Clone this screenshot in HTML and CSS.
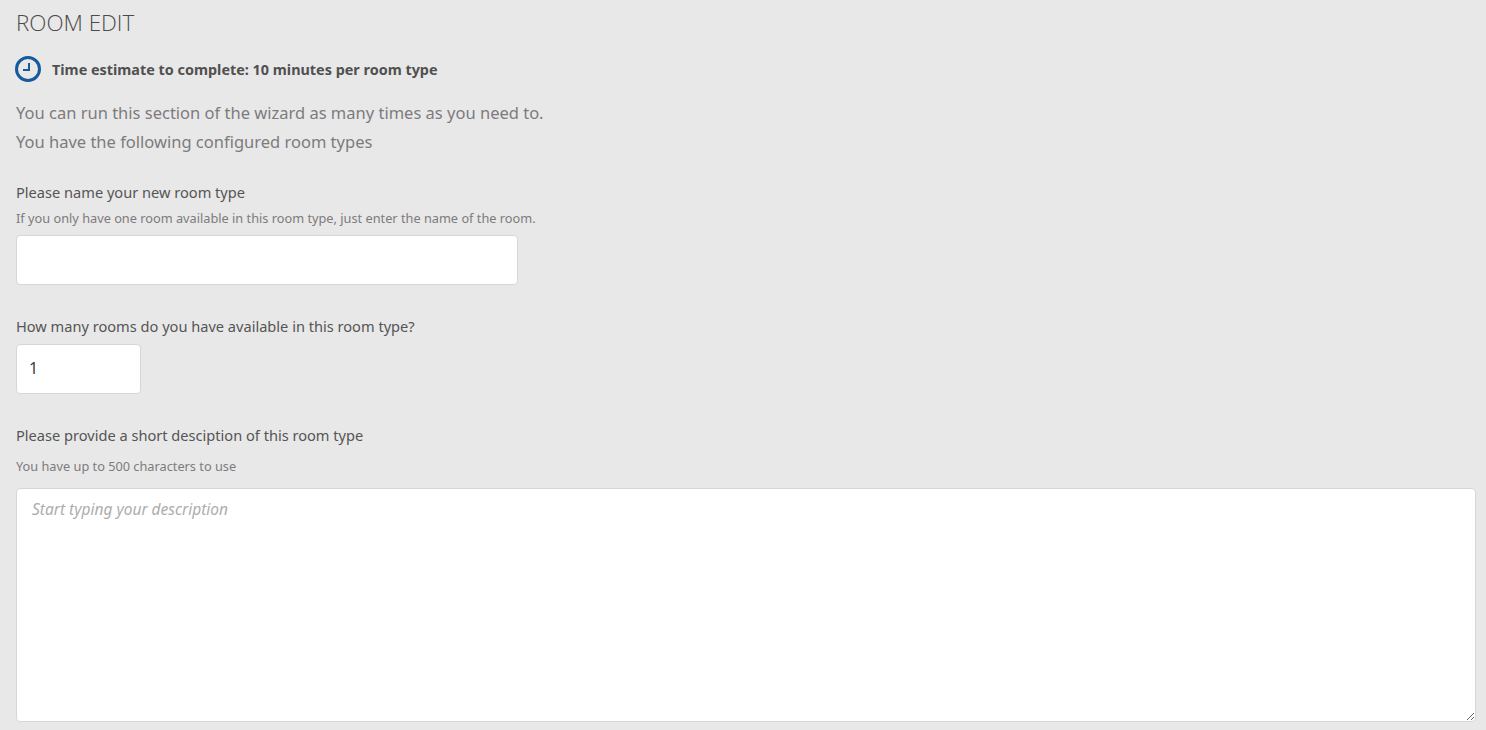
FILE: index.html
```html
<!DOCTYPE html>
<html lang="en">
<head>
<meta charset="utf-8">
<title>Room edit</title>
<link rel="stylesheet" href="styles.css">
</head>
<body>
<main class="page">
  <h1 class="title">ROOM EDIT</h1>
  <div class="estimate">
    <svg class="clock" width="26" height="26" viewBox="0 0 26 26" aria-hidden="true">
      <circle cx="13" cy="13" r="11.500" fill="none" stroke="#155a9c" stroke-width="3"/>
      <path d="M14 7v7H8" fill="none" stroke="#155a9c" stroke-width="2"/>
    </svg>
    <strong class="estimate-text">Time estimate to complete: 10 minutes per room type</strong>
  </div>
  <p class="lead first">You can run this section of the wizard as many times as you need to.</p>
  <p class="lead">You have the following configured room types</p>

  <section class="field name-field">
    <label class="label" for="name">Please name your new room type</label>
    <p class="hint hint-tight">If you only have one room available in this room type, just enter the name of the room.</p>
    <input class="control name-input" id="name" type="text">
  </section>

  <section class="field count-field">
    <label class="label" for="count">How many rooms do you have available in this room type?</label>
    <input class="control count-input" id="count" type="text" value="1">
  </section>

  <section class="field desc-field">
    <label class="label" for="desc">Please provide a short desciption of this room type</label>
    <p class="hint hint-loose">You have up to 500 characters to use</p>
    <textarea class="control desc-input" id="desc" placeholder="Start typing your description"></textarea>
  </section>
</main>
</body>
</html>
```

FILE: styles.css
```css
* { box-sizing: border-box; }
html, body { margin: 0; height: 100%; overflow: hidden; }
body {
  background: #e8e8e8;
  color: #505050;
  font-family: "Noto Sans", "Open Sans", sans-serif;
}
.page { padding: 0 10px 0 16px; }
.title {
  margin: 0;
  padding-top: 8px;
  font-family: "Open Sans", sans-serif;
  font-weight: 300;
  font-size: 22.400px;
  line-height: 30px;
  color: #4a4a4a;
}
.estimate {
  display: flex;
  align-items: center;
  gap: 11px;
  margin: 18px 0 0 -1px;
  height: 26px;
}
.clock { display: block; flex: none; }
.estimate-text { font-size: 14.400px; font-weight: 700; color: #505050; }
.lead {
  margin: 0;
  font-size: 16.500px;
  line-height: 29px;
  color: #7d7b7d;
}
.first { margin-top: 16px; }
.field { display: block; }
.label { display: block; font-size: 14.600px; line-height: 20px; color: #555; }
.hint { margin: 0; font-size: 12.750px; line-height: 18px; color: #7d7b7d; }
.hint-tight { margin-top: 7px; margin-bottom: 8px; }
.hint-loose { margin-top: 12px; margin-bottom: 13px; }
.name-field { margin-top: 26px; }
.count-field { margin-top: 31px; }
.desc-field { margin-top: 31px; }
.count-field .label { margin-bottom: 8px; }
.control {
  display: block;
  background: #fff;
  border: 1px solid #d6d6d6;
  border-radius: 4px;
  font-family: inherit;
  color: #4a4a4a;
  outline: none;
}
.name-input { width: 502px; height: 50px; }
.count-input { width: 125px; height: 50px; padding: 0 12px 2px; font-size: 16px; color: #3c3c3c; }
.desc-input {
  width: 100%;
  height: 234px;
  padding: 10px 15px;
  font-size: 15.500px;
  line-height: 20px;
}
.desc-input::placeholder { color: #adadad; font-style: italic; opacity: 1; }
```
